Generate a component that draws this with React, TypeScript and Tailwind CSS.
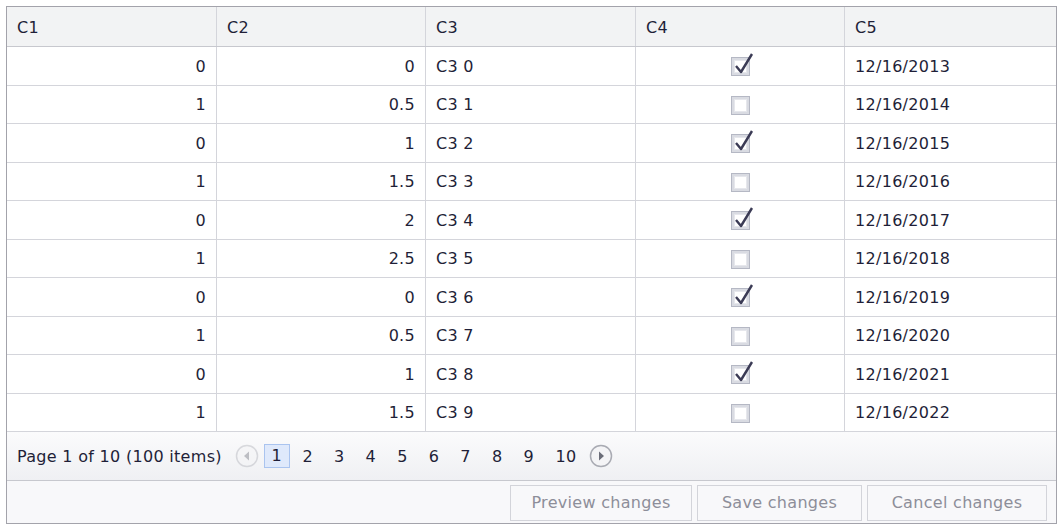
import React from "react";

const rows = Array.from({ length: 10 }, (_, i) => ({
  c1: i % 2,
  c2: [0, 0.5, 1, 1.5, 2, 2.5, 0, 0.5, 1, 1.5][i],
  c3: `C3 ${i}`,
  c4: i % 2 === 0,
  c5: `12/16/${2013 + i}`,
}));

const CheckBox = ({ checked }: { checked: boolean }) => (
  <span className="relative inline-block w-[19px] h-[19px] border border-[#b5b8c4] bg-[#d9dbe2] p-[2px]">
    <span className="block w-full h-full bg-white border border-[#e6e7ec]" />
    {checked && (
      <svg className="absolute left-[2px] top-[-5px]" width="20" height="22" viewBox="0 0 20 22">
        <path d="M2 13 L7 19 L18 1" fill="none" stroke="#3b3b55" strokeWidth="2.4" strokeLinejoin="round" />
      </svg>
    )}
  </span>
);

const CircleArrow = ({ dir, disabled }: { dir: "l" | "r"; disabled?: boolean }) => (
  <svg width="24" height="24" viewBox="0 0 24 24" className={disabled ? "opacity-40" : ""}>
    <circle cx="12" cy="12" r="10.5" fill="#f4f4f6" stroke="#a9abb3" strokeWidth="1.5" />
    {dir === "r" ? (
      <path d="M10 7.5 L15 12 L10 16.5 Z" fill="#6b6d78" />
    ) : (
      <path d="M14 7.5 L9 12 L14 16.5 Z" fill="#6b6d78" />
    )}
  </svg>
);

export default function App() {
  const cell = "h-[38.5px] px-[10px] pt-[2px] border-r border-b border-[#d4d5db] last:border-r-0";
  return (
    <div className="w-[1062px] h-[529px] bg-white p-[6px] font-['DejaVu_Sans',sans-serif] text-[16px] tracking-[0.3px] text-[#1f1f38]">
      <div className="border border-[#a3a3ab] h-[518px] w-[1051px] flex flex-col">
        <div className="grid grid-cols-[210px_209px_210px_209px_1fr] bg-[#f2f3f4] border-b border-[#c7c8ce] h-[40px]">
          {["C1", "C2", "C3", "C4", "C5"].map((h) => (
            <div key={h} className="px-[10px] pt-[2px] flex items-center border-r border-[#d4d5db] last:border-r-0">
              {h}
            </div>
          ))}
        </div>
        {rows.map((r, i) => (
          <div key={i} className="grid grid-cols-[210px_209px_210px_209px_1fr]">
            <div className={`${cell} flex items-center justify-end`}>{r.c1}</div>
            <div className={`${cell} flex items-center justify-end`}>{r.c2}</div>
            <div className={`${cell} flex items-center`}>{r.c3}</div>
            <div className={`${cell} flex items-center justify-center`}>
              <CheckBox checked={r.c4} />
            </div>
            <div className={`${cell} flex items-center`}>{r.c5}</div>
          </div>
        ))}
        <div className="h-[49px] flex items-center px-[10px] bg-gradient-to-b from-[#fbfbfc] to-[#eff0f3] border-b border-[#c7c8ce]">
          <span className="mr-[13px] pt-[2px]">Page 1 of 10 (100 items)</span>
          <CircleArrow dir="l" disabled />
          <span className="ml-[5px] mr-[2px] w-[26px] h-[24px] flex items-center justify-center bg-[#dfe9fb] border border-[#aac4ef]">1</span>
          {[2, 3, 4, 5, 6, 7, 8, 9].map((n) => (
            <span key={n} className="w-[31.6px] flex justify-center pt-[2px]">
              {n}
            </span>
          ))}
          <span className="w-[43px] flex justify-center pt-[2px]">10</span>
          <span className="ml-[1px]">
            <CircleArrow dir="r" />
          </span>
        </div>
        <div className="flex-1 bg-[#f8f8fa] flex items-center justify-end gap-[5px] pr-[9px] pt-[2px]">
          {["Preview changes", "Save changes", "Cancel changes"].map((b, i) => (
            <button
              key={b}
              className={`h-[36px] ${["w-[182px]", "w-[165px]", "w-[180px]"][i]} border border-[#d3d4da] bg-[#f8f8fa] text-[#8d8e99] text-[16px] tracking-[0.3px]`}
            >
              {b}
            </button>
          ))}
        </div>
      </div>
    </div>
  );
}
